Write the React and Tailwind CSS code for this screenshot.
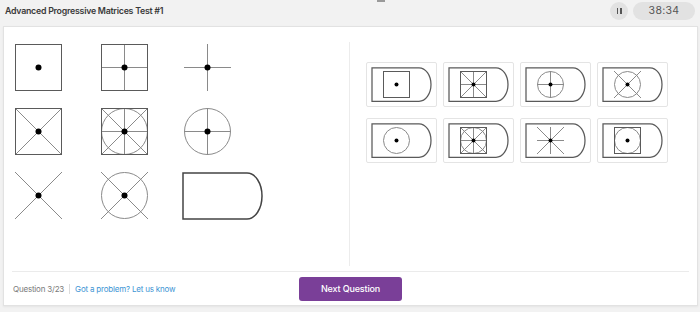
import React from "react";

function Fig({ size = 47, square, cross, x, circle, dot = true, dotR = 3, ox = 0, oy = 0 }) {
  const s = size;
  const c = s / 2;
  const line = "#8a8a8a";
  return (
    <g transform={`translate(${ox} ${oy})`}>
      {circle && <circle cx={c} cy={c} r={c - 0.5} fill="none" stroke={line} strokeWidth="1" />}
      {x && (
        <>
          <line x1="0" y1="0" x2={s} y2={s} stroke={line} strokeWidth="1" />
          <line x1={s} y1="0" x2="0" y2={s} stroke={line} strokeWidth="1" />
        </>
      )}
      {cross && (
        <>
          <line x1={c} y1="0" x2={c} y2={s} stroke={line} strokeWidth="1" />
          <line x1="0" y1={c} x2={s} y2={c} stroke={line} strokeWidth="1" />
        </>
      )}
      {square && <rect x="0.5" y="0.5" width={s - 1} height={s - 1} fill="none" stroke="#5a5a5a" strokeWidth="1" />}
      {dot && <circle cx={c} cy={c} r={dotR} fill="#000" />}
    </g>
  );
}

function MainFig(props) {
  return (
    <svg width="47" height="47" viewBox="0 0 47 47">
      <Fig {...props} />
    </svg>
  );
}

function BigD() {
  return (
    <svg width="81" height="48" viewBox="0 0 81 48">
      <path d="M1 1 H65 A15 23 0 0 1 65 47 H1 Z" fill="none" stroke="#444" strokeWidth="1.5" />
    </svg>
  );
}

function Answer(props) {
  return (
    <div className="w-[71px] h-[45px] border border-[#e4e4e4] rounded-[2px] bg-white flex items-center justify-center">
      <svg width="61" height="35" viewBox="0 0 61 35">
        <path d="M1 0.75 H48 A12 16.75 0 0 1 48 34.25 H1 Z" fill="none" stroke="#5a5a5a" strokeWidth="1.25" />
        <Fig size={27} dotR={2} ox={12} oy={4} {...props} />
      </svg>
    </div>
  );
}

export default function App() {
  const mains = [
    { square: true },
    { square: true, cross: true },
    { cross: true },
    { square: true, x: true },
    { square: true, x: true, cross: true, circle: true },
    { circle: true, cross: true },
    { x: true },
    { x: true, circle: true },
  ];
  const answers = [
    { square: true },
    { square: true, x: true, cross: true },
    { circle: true, cross: true },
    { circle: true, x: true },
    { circle: true },
    { square: true, x: true, cross: true, circle: true },
    { x: true, cross: true },
    { square: true, circle: true },
  ];
  return (
    <div className="w-[700px] h-[312px] bg-[#f2f2f2] overflow-hidden relative" style={{ fontFamily: "Inter, 'Noto Sans', sans-serif" }}>
      <div className="absolute left-[377px] top-0 w-[8px] h-[2px] bg-[#9a9a9a]" />
      <div className="h-[26px] flex items-start pt-[2px] px-[5px]">
        <div className="h-[18px] leading-[18px] text-[8.8px] tracking-[-0.25px] font-semibold text-[#3a3a3a]">Advanced Progressive Matrices Test #1</div>
        <div className="ml-auto flex items-center gap-[5px]">
          <div className="w-[18px] h-[18px] rounded-full bg-[#e2e2e2] flex items-center justify-center gap-[2px]">
            <div className="w-[1.5px] h-[6px] bg-[#555]" />
            <div className="w-[1.5px] h-[6px] bg-[#555]" />
          </div>
          <div className="w-[62px] h-[18px] rounded-full bg-[#e2e2e2] flex items-center justify-center text-[10.5px] text-[#555] tracking-[0.3px]">38:34</div>
        </div>
      </div>
      <div className="ml-[3px] w-[695px] h-[280px] bg-white border border-[#e2e2e2] shadow-[0_1px_2px_rgba(0,0,0,0.06)] flex flex-col">
        <div className="h-[244px] flex">
          <div className="w-[345px] pl-[11px] pt-[17px] grid grid-cols-[86px_83px_86px] auto-rows-[64px] content-start">
            {mains.map((m, i) => (
              <div key={i}>
                <MainFig {...m} />
              </div>
            ))}
            <div className="-ml-[2px]">
              <BigD />
            </div>
          </div>
          <div className="w-px bg-[#ececec] mt-[15px] mb-[5px]" />
          <div className="flex-1 pl-[16px] pt-[35px]">
            <div className="grid grid-cols-[71px_71px_71px_71px] gap-x-[6px] gap-y-[11px]">
              {answers.map((a, i) => (
                <Answer key={i} {...a} />
              ))}
            </div>
          </div>
        </div>
        <div className="mx-[8px] border-t border-[#ebebeb] flex-1 flex items-start pt-[5px]">
          <div className="w-[287px] h-[24px] flex items-center text-[8px] tracking-[-0.2px] pl-px">
            <span className="text-[#7a7a7a]">Question 3/23</span>
            <span className="mx-[5px] w-px h-[10px] bg-[#dcdcdc]" />
            <span className="text-[#3d95d4]">Got a problem? Let us know</span>
          </div>
          <div className="w-[103px] h-[24px] rounded-[3px] bg-[#7a3f98] text-white text-[9px] tracking-[-0.15px] font-medium flex items-center justify-center">Next Question</div>
        </div>
      </div>
    </div>
  );
}
